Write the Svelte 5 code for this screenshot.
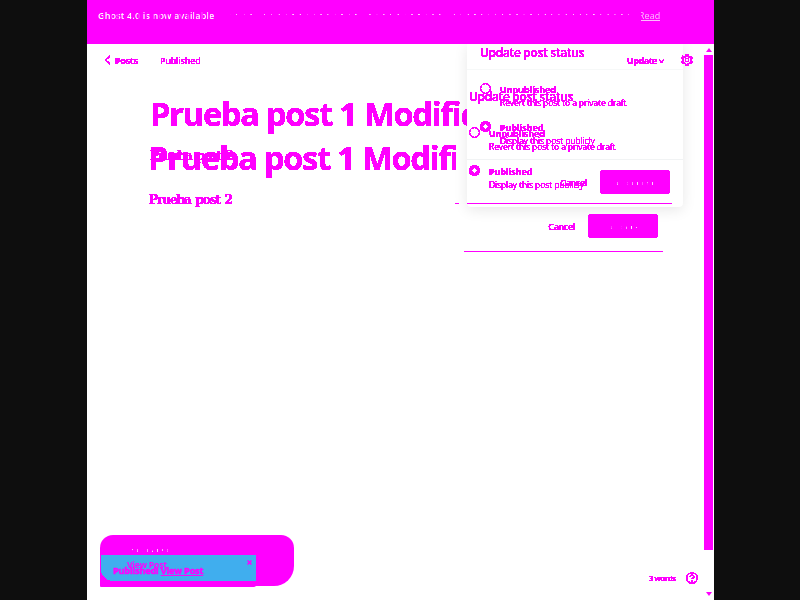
<script>
  const popovers = [
    { x: 467, y: 44, front: true },
    { x: 456, y: 88, front: false }
  ];
  const options = [
    { title: 'Unpublished', note: 'Revert this post to a private draft', on: false },
    { title: 'Published', note: 'Display this post publicly', on: true }
  ];
</script>

<div class="screen">
  <svg class="defs" width="0" height="0">
    <filter id="crisp" color-interpolation-filters="sRGB" x="0" y="0" width="1" height="1">
      <feComponentTransfer><feFuncA type="discrete" tableValues="0 1 1 1 1 1" /></feComponentTransfer>
    </filter>
  </svg>
  <main class="page">
    <div class="banner">
      <b>Ghost 4.0 is now available</b><span>&nbsp;- You are using an old version of Ghost, which means you don't have access to the latest features. <u>Read</u></span>
    </div>
    <div class="body">
      <section class="editor crisp">
        <header>
          <svg width="7" height="10" viewBox="0 0 7 10"><path d="M6 1 1.5 5 6 9" /></svg>
          <span class="posts">Posts</span><span class="state">Published</span>
        </header>
        <div class="heading first">Prueba post 1 Modificado</div>
        <div class="heading second">Prueba post 1 Modificado</div>
        <div class="copy">Prueba post 2</div>
        <div class="copy ghost">Prueba post 2</div>
      </section>
      <aside class="scroll"><i class="up"></i><i class="thumb"></i><i class="down"></i></aside>
    </div>
  </main>

  <div class="panel"></div>
  {#each popovers as p}
    <div class="popover crisp" class:rear={!p.front} style="left:{p.x}px;top:{p.y}px">
      <h2>Update post status</h2>
      {#each options as o}
        <div class="option">
          <span class="radio" class:on={o.on}></span>
          <div><strong>{o.title}</strong><p>{o.note}</p></div>
        </div>
      {/each}
      <div class="actions"><span>Cancel</span><button><em>{p.front ? 'Unpublish' : 'Update'}</em></button></div>
    </div>
  {/each}
  <i class="rule top"></i><i class="rule stub"></i><i class="rule low"></i>

  <div class="tools crisp">
    <span>Update</span>
    <svg class="chev" width="7" height="6" viewBox="0 0 7 6"><path d="M1 1.5 3.5 4.5 6 1.5" /></svg>
    <svg width="12" height="12" viewBox="0 0 24 24"><path stroke-width="2.2" d="m10 2-.7 3.1-2.5 1.1L4 4.7 2 8.2l2.2 2.3v3L2 15.8l2 3.5 2.8-1.4 2.5 1.2L10 22h4l.7-2.9 2.5-1.2 2.8 1.4 2-3.5-2.2-2.3v-3L22 8.2l-2-3.5-2.8 1.5-2.5-1.1L14 2z" /><circle cx="12" cy="12" r="3.6" stroke-width="2" /></svg>
  </div>

  <div class="toast back"><em>Published</em></div>
  <div class="toast square"></div>
  <div class="toast blue crisp">
    <span class="link">View Post</span>
    <span class="message">Published! <u>View Post</u></span>
    <svg width="5" height="5" viewBox="0 0 5 5"><path d="M.5.5l4 4M4.5.5l-4 4" /></svg>
  </div>
  <div class="status crisp">
    <span>3 words</span>
    <svg width="12" height="12" viewBox="0 0 12 12"><circle cx="6" cy="6" r="5.3" /><path d="M4 4.8C4 2.5 8 2.6 8 4.7 8 6 6 5.8 6 7.3M6 8.2v1.3" /></svg>
  </div>
</div>

<style>
  :global(body) { margin: 0; }
  .screen { position: relative; width: 800px; height: 600px; overflow: hidden; background: #0e0e0e; color: #f0f; font-family: "Open Sans", "Noto Sans", sans-serif; font-size: 9px; white-space: nowrap; }
  .crisp { filter: url(#crisp); }
  svg { fill: none; stroke: #f0f; stroke-width: 1.1; display: block; }
  .defs { position: absolute; }
  .page { width: 627px; height: 600px; margin-left: 87px; background: #fff; display: flex; flex-direction: column; }
  .banner { height: 44px; flex: none; box-sizing: border-box; padding: 9px 0 0 11px; background: #f0f; color: #fff; line-height: 14px; display: flex; }
  .banner b { font-weight: 600; letter-spacing: .17px; width: 119px; mask: repeating-linear-gradient(90deg, #000 0 5px, #0004 5px 7px); }
  .banner span { letter-spacing: .1px; mask: repeating-linear-gradient(90deg, #0000 0 5px, #000 5px 7px) 0 5px / 424px 1px no-repeat, linear-gradient(#000b, #000b) 424px 0 / 40px 14px no-repeat; }
  .body { flex: 1; min-height: 0; display: flex; }
  .editor { flex: 1; min-width: 0; }
  header { display: flex; align-items: center; height: 14px; padding: 9px 0 0 17px; }
  .posts { width: 45px; margin-left: 4px; font-weight: 700; letter-spacing: -.3px; }
  .state { font-weight: 600; letter-spacing: -.25px; }
  .heading { height: 44px; overflow: hidden; font-size: 32.5px; line-height: 44px; font-weight: 700; letter-spacing: -1.2px; word-spacing: 0; }
  .first { width: 317px; margin: 25px 0 0 63px; }
  .second { width: 308px; margin-left: 61px; }
  .copy { margin: 9px 0 0 62px; font: 700 12px/22px "DejaVu Serif", serif; letter-spacing: -1.05px; word-spacing: 1.7px; }
  .ghost { position: relative; top: -75px; left: 1px; }
  .scroll { width: 10px; display: flex; flex-direction: column; align-items: flex-start; }
  .scroll .up, .scroll .down { border: 3px solid transparent; width: 0; height: 0; margin-left: 2px; }
  .scroll .up { margin-top: 4px; border-top: 0; border-bottom: 4px solid #f0f; }
  .scroll .thumb { width: 9px; height: 495px; margin-top: 3px; background: #f0f; }
  .scroll .down { margin-top: 42px; border-bottom: 0; border-top: 4px solid #f0f; }

  .panel { position: absolute; left: 467px; top: 44px; width: 216px; height: 163px; background: linear-gradient(#f6f8f8, #f6f8f8) 0 25px / 100% 1px no-repeat, linear-gradient(#f1f3f4, #f1f3f4) 0 115px / 100% 1px no-repeat, #fff; border-radius: 0 0 4px 4px; box-shadow: 0 3px 14px #00000018; clip-path: inset(0 -20px -25px -20px); }
  .popover { position: absolute; width: 216px; height: 163px; box-sizing: border-box; padding-left: 13px; }
  h2 { margin: 0; height: 37px; font-size: 12px; line-height: 18px; font-weight: 600; letter-spacing: -.32px; }
  .option { display: flex; height: 37.5px; }
  .option strong { display: block; font-size: 9px; line-height: 17px; letter-spacing: -.1px; }
  .option p { margin: -2px 0 0; font-size: 8.5px; line-height: 13px; font-weight: 500; letter-spacing: -.11px; }
  .radio { width: 11px; height: 11px; box-sizing: border-box; border: 1px solid #f0f; border-radius: 50%; margin: 2px 9px 0 0; }
  .radio.on { border-width: 3.5px; }
  .actions { display: flex; align-items: center; height: 24px; margin: 14px 13px 0 0; justify-content: flex-end; gap: 13px; font-weight: 600; letter-spacing: -.35px; }
  .rear .actions { margin-right: 14px; }
  button { width: 70px; height: 24px; padding: 0; border: 0; border-radius: 3px; background: #f0f; color: #fff; font: 600 9px "Open Sans", sans-serif; }
  em { font-style: normal; color: #fff; display: inline-block; mask: repeating-linear-gradient(90deg, #0000 0 4px, #000 4px 5px) 0 6px / 100% 3px no-repeat; }
  .rule { position: absolute; height: 1px; background: #f0f; }
  .rule.top { left: 467px; top: 203px; width: 205px; }
  .rule.stub { left: 455px; top: 203px; width: 4px; }
  .rule.low { left: 464px; top: 251px; width: 199px; }
  .tools { position: absolute; left: 627px; top: 53px; height: 14px; display: flex; align-items: center; font-weight: 700; letter-spacing: -.5px; }
  .chev { margin: 2px 16px 0 1px; }
  .toast { position: absolute; box-sizing: border-box; background: #f0f; }
  .back { left: 100px; top: 535px; width: 194px; height: 51px; border-radius: 13px 13px 20px 10px; padding: 8px 0 0 28px; }
  .square { left: 100px; top: 556px; width: 156px; height: 31px; border-radius: 0 0 2px 1px; }
  .blue { left: 101px; top: 555px; width: 155px; height: 26px; background: #40aeee; border-radius: 0 0 0 13px; font-weight: 700; }
  .blue .link { position: absolute; left: 26px; top: 4px; line-height: 12px; font-size: 8.5px; font-weight: 700; letter-spacing: -.15px; }
  .blue .message { position: absolute; left: 12px; top: 9px; line-height: 14px; letter-spacing: -.12px; -webkit-text-stroke: .5px #f0f; }
  .blue svg { position: absolute; right: 4px; top: 5px; stroke-width: 1.5; }
  .status { position: absolute; left: 649px; top: 572px; width: 49px; display: flex; align-items: center; justify-content: space-between; font-size: 7.5px; line-height: 12px; font-weight: 700; letter-spacing: -.35px; }
</style>
